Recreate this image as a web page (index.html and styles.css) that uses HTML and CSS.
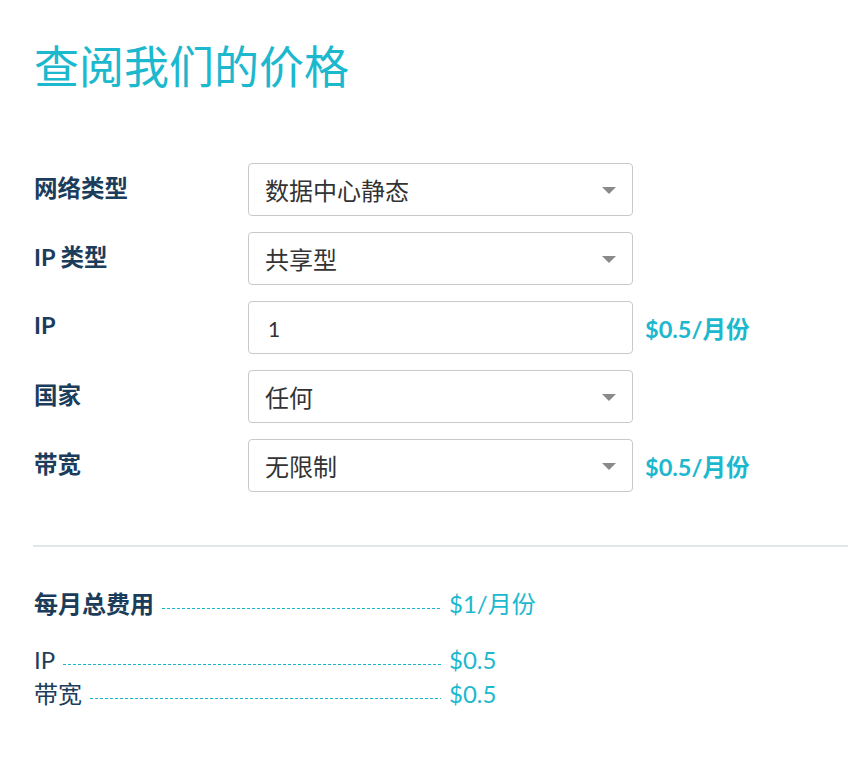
FILE: index.html
```html
<!DOCTYPE html>
<html lang="zh-CN">
<head>
<meta charset="utf-8">
<title>查阅我们的价格</title>
<link rel="stylesheet" href="styles.css">
</head>
<body>
<main class="page">
  <h1 class="title">查阅我们的价格</h1>

  <div class="form">
    <div class="row">
      <div class="label">网络类型</div>
      <div class="select"><span>数据中心静态</span><i class="caret"></i></div>
      <div class="price"></div>
    </div>
    <div class="row">
      <div class="label">IP 类型</div>
      <div class="select"><span>共享型</span><i class="caret"></i></div>
      <div class="price"></div>
    </div>
    <div class="row">
      <div class="label">IP</div>
      <div class="select input"><span>1</span></div>
      <div class="price">$0.5/月份</div>
    </div>
    <div class="row">
      <div class="label">国家</div>
      <div class="select"><span>任何</span><i class="caret"></i></div>
      <div class="price"></div>
    </div>
    <div class="row">
      <div class="label">带宽</div>
      <div class="select"><span>无限制</span><i class="caret"></i></div>
      <div class="price">$0.5/月份</div>
    </div>
  </div>

  <hr class="divider">

  <div class="summary">
    <div class="line total">
      <span class="name">每月总费用</span><span class="dots"></span><span class="val">$1/月份</span>
    </div>
    <div class="items">
      <div class="line">
        <span class="name">IP</span><span class="dots"></span><span class="val">$0.5</span>
      </div>
      <div class="line">
        <span class="name">带宽</span><span class="dots"></span><span class="val">$0.5</span>
      </div>
    </div>
  </div>
</main>
</body>
</html>
```

FILE: styles.css
```css
* { box-sizing: border-box; }
html, body { margin: 0; padding: 0; background: #fff; }
body {
  font-family: Lato, "Noto Sans CJK SC", sans-serif;
  color: #1b3d5b;
}
.page {
  padding: 30px 11px 0 34px;
}
.title {
  margin: 0;
  font-size: 45px;
  font-weight: 400;
  line-height: 74px;
  color: #1cb8ce;
}
.form {
  margin-top: 59px;
  display: flex;
  flex-direction: column;
  gap: 16px;
}
.row {
  display: grid;
  grid-template-columns: 214px 385px auto;
  align-items: center;
}
.label {
  font-size: 23.5px;
  font-weight: 700;
  color: #1b3d5b;
  margin-top: -6px;
}
.select {
  height: 53px;
  border: 1px solid #c9c9c9;
  border-radius: 4px;
  display: flex;
  align-items: center;
  justify-content: space-between;
  padding: 0 16px 0 16px;
  font-size: 24px;
  color: #333;
}
.select.input span {
  font-size: 21px;
  padding-left: 3px;
  margin-top: 2px;
}
.caret {
  width: 0;
  height: 0;
  border-left: 7px solid transparent;
  border-right: 7px solid transparent;
  border-top: 7px solid #8a8a8a;
  margin-top: 2px;
}
.price {
  margin-left: 12px;
  font-size: 23.5px;
  font-weight: 700;
  color: #1cb8ce;
}
.divider {
  margin: 53px 0 0 -1px;
  border: 0;
  height: 2px;
  background: #e1e6e8;
}
.summary {
  margin-top: 40px;
  width: 500px;
}
.line {
  display: flex;
  align-items: flex-start;
  font-size: 24px;
  line-height: 34px;
}
.line .name { white-space: nowrap; }
.total .name { font-weight: 700; }
.dots {
  flex: 0 1 auto;
  width: 100%;
  height: 1px;
  margin: 21px 8px 0 8px;
  background-image: linear-gradient(to right, #17b6cf 3px, transparent 3px);
  background-size: 5px 1px;
  background-repeat: repeat-x;
}
.line .val {
  color: #1cb8ce;
  white-space: nowrap;
  width: 85px;
  flex: none;
}
.items {
  margin-top: 22px;
}
```
